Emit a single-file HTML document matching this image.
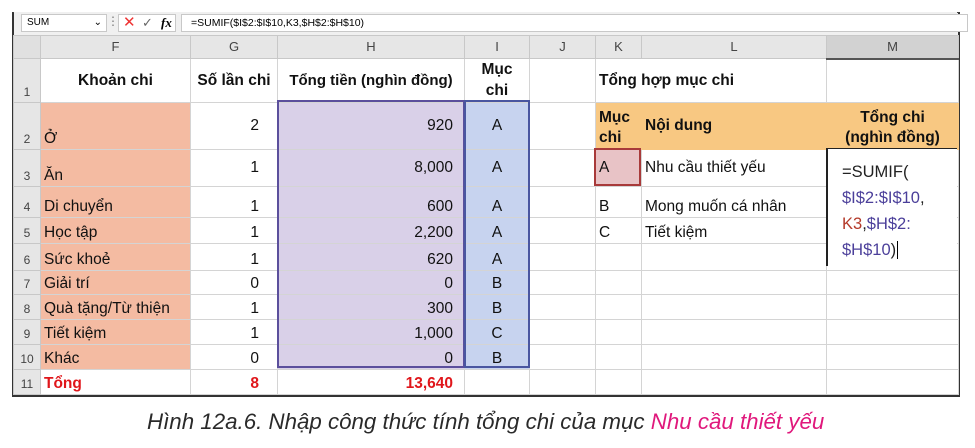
<!DOCTYPE html>
<html><head><meta charset="utf-8"><style>
body{margin:0;width:975px;height:448px;background:#fff;position:relative;overflow:hidden;font-family:"Liberation Sans",sans-serif}
.frame{position:absolute;left:12px;top:12px;width:944px;height:382px;border:2px solid #333;border-top:1px solid #444;background:#f2f2f2}
.fb{position:absolute;top:12px;height:23px;left:14px;width:943px;background:#f0f0f0}
.box{position:absolute;background:#fff;border:1px solid #c8c8c8;font-size:10px;line-height:16px}
table{position:absolute;left:13px;top:35px;border-collapse:collapse;table-layout:fixed;font-size:15.5px;color:#111}
td{border:1px solid #d4d4d4;padding:0 3px 1px 3px;vertical-align:bottom;white-space:nowrap;overflow:visible;background:#fff;line-height:19px}
tr.h td{background:#e6e6e6;color:#444;text-align:center;font-size:13px;vertical-align:middle;border-color:#c8c8c8}
td.rn{background:#e6e6e6;color:#444;font-size:12px;text-align:center;border-color:#c8c8c8;padding:0}
.b{font-weight:bold}.c{text-align:center}.r{text-align:right;padding-right:18px}
.lav.r,.h11{padding-right:11px}
.sal{background:#f4bba2}.lav{background:#d9d0e8}.blu{background:#c7d3ef}.org{background:#f8c882}
.red{color:#e0161b;font-weight:bold}
</style></head><body>
<div class="frame"></div>
<div class="fb"></div>
<div class="box" style="left:21px;top:14px;width:79px;height:16px;padding-left:5px">SUM<span style="position:absolute;right:4px;top:0">&#8964;</span></div>
<div style="position:absolute;left:107px;top:14px;font-size:12px;color:#777">&#8942;</div>
<div class="box" style="left:118px;top:14px;width:56px;height:16px"><span style="color:#e33;font-size:15px;position:absolute;left:4px;top:0">✕</span><span style="color:#666;font-size:13px;position:absolute;left:23px;top:0">✓</span><i style="position:absolute;left:42px;top:0;font-family:'Liberation Serif',serif;font-size:13px;font-weight:bold">fx</i></div>
<div class="box" style="left:181px;top:14px;width:776px;height:16px;padding-left:9px;font-size:10.5px">=SUMIF($I$2:$I$10,K3,$H$2:$H$10)</div>
<table>
<colgroup><col style="width:27px"><col style="width:150px"><col style="width:87px"><col style="width:187px"><col style="width:65px"><col style="width:66px"><col style="width:46px"><col style="width:185px"><col style="width:132px"></colgroup>
<tr class="h" style="height:23px"><td class="rn" style="background:#e0e0e0"></td><td>F</td><td>G</td><td>H</td><td>I</td><td>J</td><td>K</td><td>L</td><td style="background:#d2d2d2;border-bottom:2px solid #555">M</td></tr>
<tr style="height:43px"><td class="rn" style="vertical-align:bottom">1</td><td class="b c" style="vertical-align:middle">Khoản chi</td><td class="b c" style="vertical-align:middle;padding:0">Số lần chi</td><td class="b c" style="vertical-align:middle;padding:0;font-size:15px">Tổng tiền (nghìn đồng)</td><td class="b c" style="vertical-align:middle;line-height:21px">Mục<br>chi</td><td></td><td colspan="2" class="b" style="vertical-align:middle">Tổng hợp mục chi</td><td></td></tr>
<tr style="height:47px"><td class="rn">2</td><td class="sal">Ở</td><td class="r" style="vertical-align:middle">2</td><td class="lav r" style="vertical-align:middle">920</td><td class="blu c" style="vertical-align:middle">A</td><td></td><td class="org b" style="line-height:20px;border-color:#f8c882">Mục<br>chi</td><td class="org b" style="vertical-align:middle;border-color:#f8c882">Nội dung</td><td class="org b c" style="line-height:20px;border-color:#f8c882">Tổng chi<br>(nghìn đồng)</td></tr>
<tr style="height:37px"><td class="rn">3</td><td class="sal">Ăn</td><td class="r" style="vertical-align:middle">1</td><td class="lav r" style="vertical-align:middle">8,000</td><td class="blu c" style="vertical-align:middle">A</td><td></td><td style="background:#e8c3c6;vertical-align:middle">A</td><td style="vertical-align:middle">Nhu cầu thiết yếu</td><td></td></tr>
<tr style="height:31px"><td class="rn">4</td><td class="sal">Di chuyển</td><td class="r">1</td><td class="lav r">600</td><td class="blu c">A</td><td></td><td>B</td><td>Mong muốn cá nhân</td><td></td></tr>
<tr style="height:26px"><td class="rn">5</td><td class="sal">Học tập</td><td class="r">1</td><td class="lav r">2,200</td><td class="blu c">A</td><td></td><td>C</td><td>Tiết kiệm</td><td></td></tr>
<tr style="height:27px"><td class="rn">6</td><td class="sal">Sức khoẻ</td><td class="r">1</td><td class="lav r">620</td><td class="blu c">A</td><td></td><td></td><td></td><td></td></tr>
<tr style="height:24px"><td class="rn">7</td><td class="sal">Giải trí</td><td class="r">0</td><td class="lav r">0</td><td class="blu c">B</td><td></td><td></td><td></td><td></td></tr>
<tr style="height:25px"><td class="rn">8</td><td class="sal">Quà tặng/Từ thiện</td><td class="r">1</td><td class="lav r">300</td><td class="blu c">B</td><td></td><td></td><td></td><td></td></tr>
<tr style="height:25px"><td class="rn">9</td><td class="sal">Tiết kiệm</td><td class="r">1</td><td class="lav r">1,000</td><td class="blu c">C</td><td></td><td></td><td></td><td></td></tr>
<tr style="height:25px"><td class="rn">10</td><td class="sal">Khác</td><td class="r">0</td><td class="lav r">0</td><td class="blu c">B</td><td></td><td></td><td></td><td></td></tr>
<tr style="height:25px"><td class="rn">11</td><td class="red">Tổng</td><td class="r red">8</td><td class="r red h11">13,640</td><td></td><td></td><td></td><td></td><td></td></tr>
</table>
<div style="position:absolute;left:277px;top:100px;width:188px;height:268px;border:2px solid #5b4f9c;box-sizing:border-box"></div>
<div style="position:absolute;left:464px;top:100px;width:66px;height:268px;border:2px solid #4a56a0;box-sizing:border-box"></div>
<div style="position:absolute;left:594px;top:148px;width:47px;height:38px;border:2px solid #a83a3a;box-sizing:border-box"></div>
<div style="position:absolute;left:826px;top:148px;width:131px;height:118px;background:#fff;border-left:2px solid #222;border-top:1px solid #222;box-sizing:border-box;padding:10px 0 0 14px;font-size:16.5px;line-height:26px;color:#222">=SUMIF(<br><span style="color:#4b3f9a">$I$2:$I$10</span>,<br><span style="color:#b43a2a">K3</span>,<span style="color:#4b3f9a">$H$2:</span><br><span style="color:#4b3f9a">$H$10</span>)<span style="border-left:1px solid #000;margin-left:1px"></span></div>
<div style="position:absolute;left:147px;top:409px;width:700px;white-space:nowrap;font-style:italic;font-size:22.3px;color:#2a2a2a">Hình 12a.6. Nhập công thức tính tổng chi của mục <span style="color:#e0187c">Nhu cầu thiết yếu</span></div>
</body></html>
